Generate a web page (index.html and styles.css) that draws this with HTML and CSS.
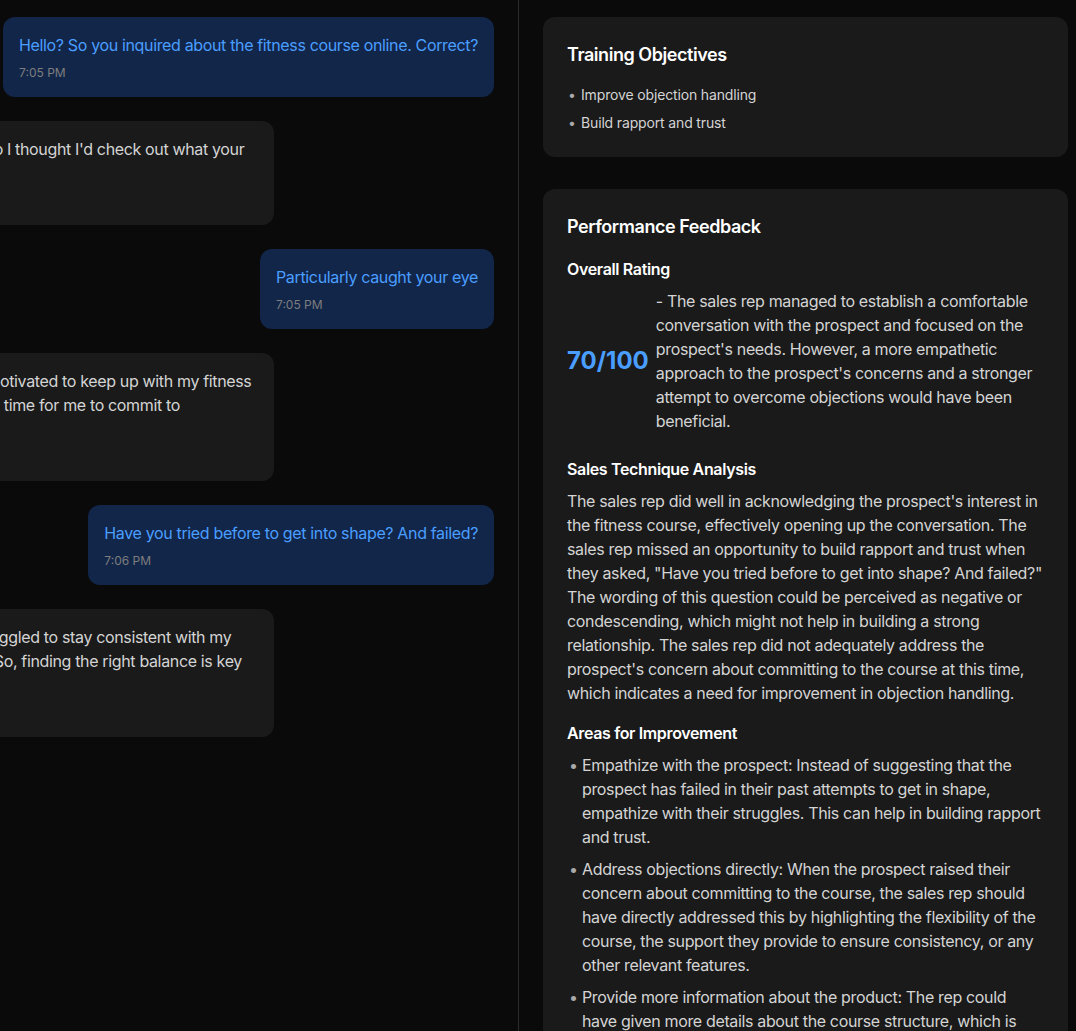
FILE: index.html
```html
<!DOCTYPE html>
<html lang="en">
  <head>
    <meta charset="UTF-8" />
    <meta name="viewport" content="width=device-width, initial-scale=1.0" />
    <title>Sales Training Session</title>
    <link rel="stylesheet" href="styles.css">
  </head>
  <body>
    <div class="chat">
      <div class="messages">
        <div class="msg msg-rep">
          <p class="msg-text">Hello? So you inquired about the fitness course online. Correct?</p>
          <span class="msg-time">7:05 PM</span>
        </div>
        <div class="msg msg-prospect">
          <p class="msg-text">Yeah, I saw the ad online, so I thought I'd check out what your program offers.</p>
          <span class="msg-time">7:05 PM</span>
        </div>
        <div class="msg msg-rep">
          <p class="msg-text">Particularly caught your eye</p>
          <span class="msg-time">7:05 PM</span>
        </div>
        <div class="msg msg-prospect">
          <p class="msg-text">Well, I really haven't been motivated to keep up with my fitness goals. Not sure it is the right time for me to commit to membership fees.</p>
          <span class="msg-time">7:06 PM</span>
        </div>
        <div class="msg msg-rep">
          <p class="msg-text">Have you tried before to get into shape? And failed?</p>
          <span class="msg-time">7:06 PM</span>
        </div>
        <div class="msg msg-prospect">
          <p class="msg-text">Honestly, I have always struggled to stay consistent with my routine and training habits. So, finding the right balance is key for me.</p>
          <span class="msg-time">7:06 PM</span>
        </div>
      </div>
    </div>

    <div class="sidebar">
      <div class="card">
        <h2>Training Objectives</h2>
        <ul class="objectives">
          <li>Improve objection handling</li>
          <li>Build rapport and trust</li>
        </ul>
      </div>

      <div class="card">
        <h2>Performance Feedback</h2>

        <h3>Overall Rating</h3>
        <div class="rating">
          <span class="score">70/100</span>
          <p>- The sales rep managed to establish a comfortable conversation with the prospect and focused on the prospect's needs. However, a more empathetic approach to the prospect's concerns and a stronger attempt to overcome objections would have been beneficial.</p>
        </div>

        <h3>Sales Technique Analysis</h3>
        <p class="analysis">The sales rep did well in acknowledging the prospect's interest in the fitness course, effectively opening up the conversation. The sales rep missed an opportunity to build rapport and trust when they asked, "Have you tried before to get into shape? And failed?" The wording of this question could be perceived as negative or condescending, which might not help in building a strong relationship. The sales rep did not adequately address the prospect's concern about committing to the course at this time, which indicates a need for improvement in objection handling.</p>

        <h3>Areas for Improvement</h3>
        <ul class="improvements">
          <li>Empathize with the prospect: Instead of suggesting that the prospect has failed in their past attempts to get in shape, empathize with their struggles. This can help in building rapport and trust.</li>
          <li>Address objections directly: When the prospect raised their concern about committing to the course, the sales rep should have directly addressed this by highlighting the flexibility of the course, the support they provide to ensure consistency, or any other relevant features.</li>
          <li>Provide more information about the product: The rep could have given more details about the course structure, which is something the prospect was clearly interested in.</li>
        </ul>
      </div>
    </div>
  </body>
</html>
```

FILE: styles.css
```css
*,
*::before {
  box-sizing: border-box;
}
body {
  margin: 0;
  height: 100vh;
  display: flex;
  overflow: hidden;
  background-color: #0a0a0a;
  color: #d4d4d4;
  font-family: Inter, "Liberation Sans", sans-serif;
  font-size: 16px;
  line-height: 24px;
  letter-spacing: -0.35px;
}
p,
h2,
h3,
ul {
  margin: 0;
}

/* chat column */
.chat {
  width: 519px;
  flex-shrink: 0;
  border-right: 1px solid #2c2c2c;
  overflow: hidden;
}
.messages {
  display: flex;
  flex-direction: column;
  gap: 24px;
  padding: 17px 24px 17px 0;
}
.msg {
  padding: 16px;
  border-radius: 12px;
}
.msg-rep {
  align-self: flex-end;
  background-color: #12264a;
  color: #4a9eff;
}
.msg-prospect {
  align-self: flex-start;
  width: 492px;
  margin-left: -218px;
  background-color: #1a1a1a;
  color: #d4d4d4;
}
.msg-time {
  display: block;
  margin-top: 7px;
  font-size: 12px;
  line-height: 17px;
  letter-spacing: 0;
  color: #7d7d7d;
}

/* feedback column */
.sidebar {
  flex: 1;
  display: flex;
  flex-direction: column;
  gap: 32px;
  padding: 17px 8px 0 24px;
}
.card {
  background-color: #1a1a1a;
  border-radius: 12px;
  padding: 24px;
}
h2 {
  font-size: 18px;
  line-height: 28px;
  font-weight: 600;
  letter-spacing: -0.45px;
  color: #fff;
  margin-bottom: 16px;
}
h3 {
  font-size: 16px;
  line-height: 24px;
  font-weight: 600;
  color: #fff;
  margin-bottom: 8px;
}
ul {
  list-style: none;
  padding: 0;
}
li {
  display: flex;
}
li::before {
  content: "\2022";
  flex-shrink: 0;
  color: #aaa;
}
.objectives {
  display: flex;
  flex-direction: column;
  gap: 8px;
  font-size: 14px;
  line-height: 20px;
  letter-spacing: -0.15px;
}
.objectives li::before {
  width: 14px;
  padding-left: 1px;
}
.rating {
  display: flex;
  align-items: center;
  gap: 7px;
  margin-bottom: 24px;
}
.score {
  flex-shrink: 0;
  font-size: 24px;
  line-height: 32px;
  font-weight: 700;
  letter-spacing: 0;
  color: #4a9eff;
}
.analysis {
  margin-bottom: 16px;
}
.improvements {
  display: flex;
  flex-direction: column;
  gap: 8px;
}
.improvements li::before {
  width: 15px;
  padding-left: 2px;
}
```
